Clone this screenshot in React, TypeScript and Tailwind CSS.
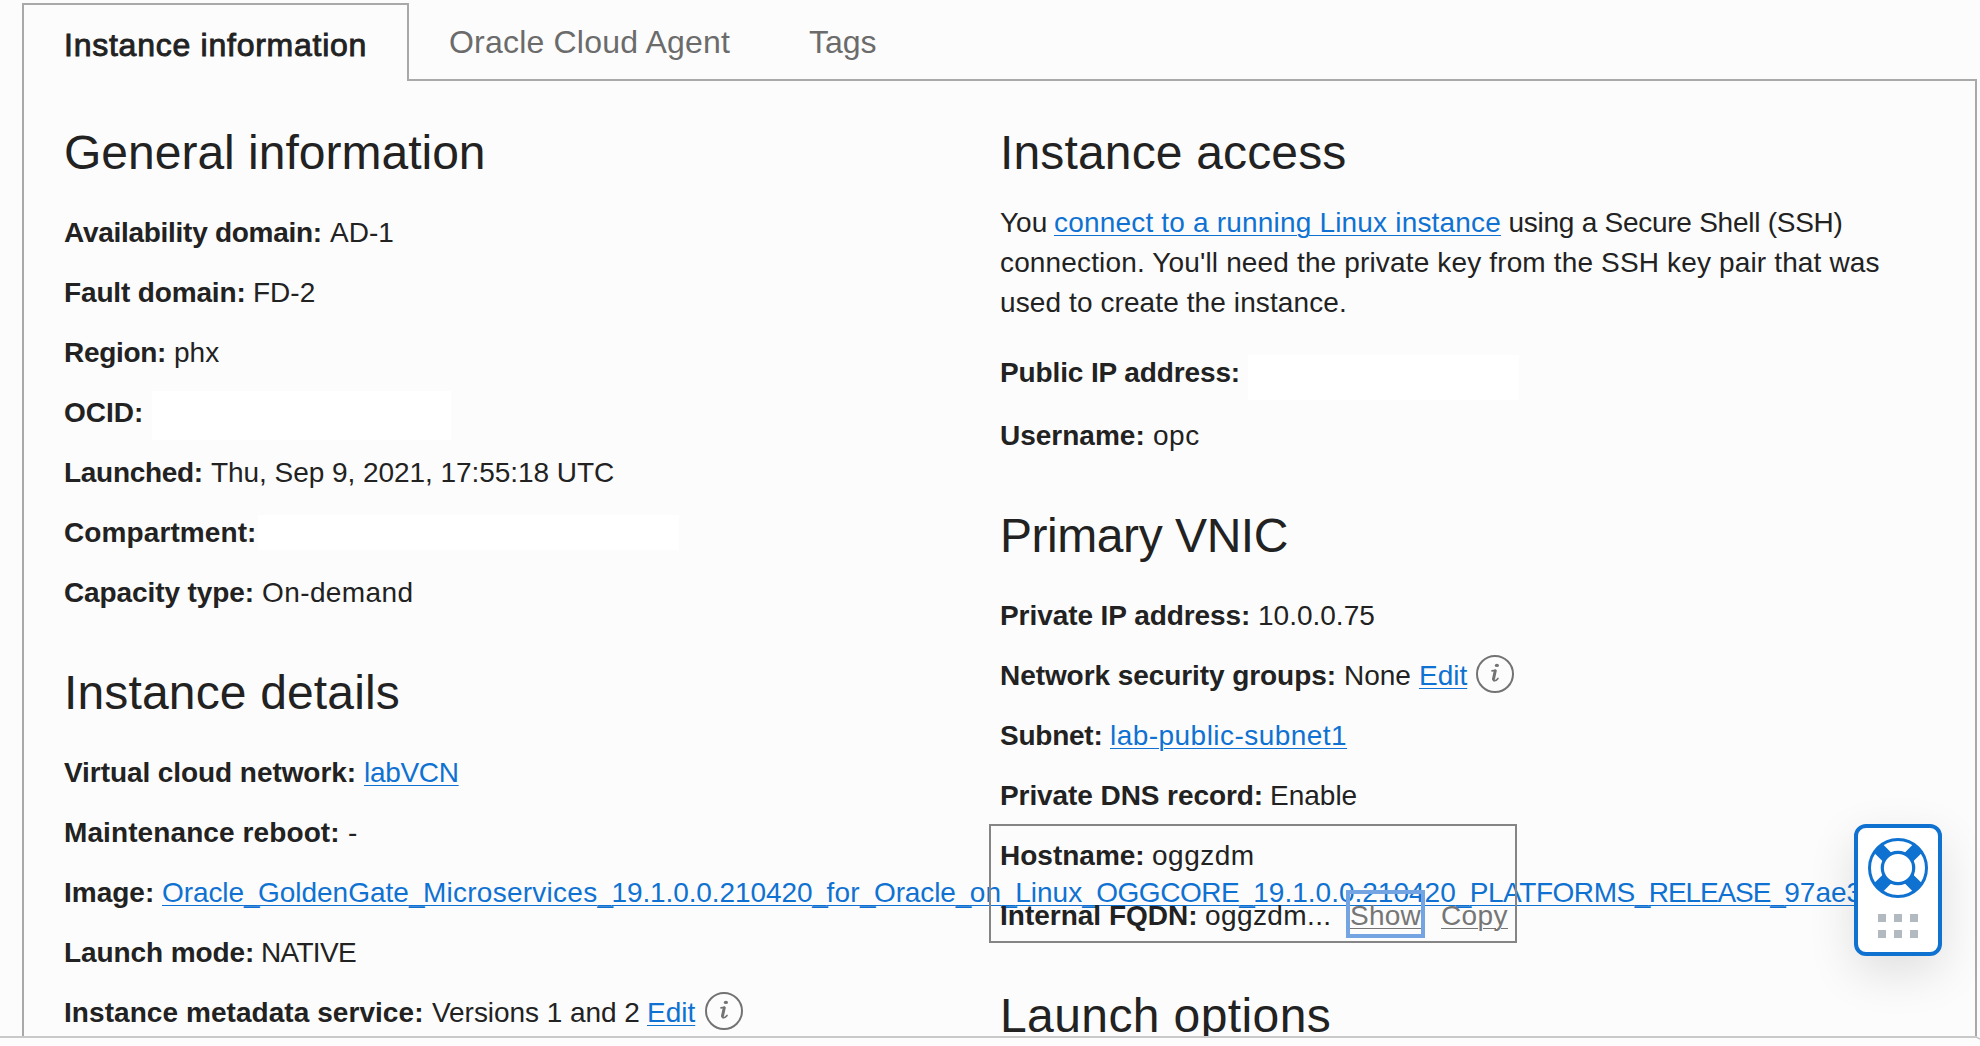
import { Fragment, type ReactNode } from "react";

const IMAGE_NAME_PARTS = [
  { text: "Oracle", tracking: "tracking-[-0.1px]" },
  { text: "GoldenGate", tracking: "tracking-[0px]" },
  { text: "Microservices", tracking: "tracking-[0.26px]" },
  { text: "19.1.0.0.210420", tracking: "tracking-[-0.1px]" },
  { text: "for", tracking: "tracking-[0.3px]" },
  { text: "Oracle", tracking: "tracking-[-0.1px]" },
  { text: "on", tracking: "tracking-[0.1px]" },
  { text: "Linux", tracking: "tracking-[0px]" },
  { text: "OGGCORE", tracking: "tracking-[-0.45px]" },
  { text: "19.1.0.0.210420", tracking: "tracking-[0px]" },
  { text: "PLATFORMS", tracking: "tracking-[-0.45px]" },
  { text: "RELEASE", tracking: "tracking-[-1.1px]" },
  { text: "97ae3", tracking: "tracking-[0px]" },
];

function Heading({ children, className = "" }: { children: ReactNode; className?: string }) {
  return (
    <h2 className={`mb-5 whitespace-nowrap text-[48px] leading-[60px] font-normal ${className}`}>
      {children}
    </h2>
  );
}

function Row({
  label,
  labelClass,
  children,
  className = "",
}: {
  label: string;
  labelClass: string;
  children?: ReactNode;
  className?: string;
}) {
  return (
    <div className={`flex h-[60px] items-center whitespace-nowrap leading-[60px] ${className}`}>
      <span className={`shrink-0 font-bold ${labelClass}`}>{label}</span>
      {children}
    </div>
  );
}

function Link({ children, className = "" }: { children: ReactNode; className?: string }) {
  return (
    <a
      href="#"
      className={`text-[#0f72d2] underline decoration-1 underline-offset-[3px] ${className}`}
    >
      {children}
    </a>
  );
}

function InfoIcon() {
  return (
    <svg viewBox="0 0 38 38" className="-mt-1 size-[38px] shrink-0" fill="none">
      <circle cx="19" cy="19" r="18" stroke="#737373" strokeWidth="2" />
      <ellipse cx="20.9" cy="10.4" rx="2.1" ry="1.7" fill="#737373" />
      <path
        d="M16 15.9 L19.6 15.2 L17.4 23.6 C16.8 26.6 19.6 26.6 22 23.4"
        stroke="#737373"
        strokeWidth="1.6"
        strokeLinecap="round"
        strokeLinejoin="round"
      />
      <path d="M19.2 16 L17.5 24" stroke="#737373" strokeWidth="3" strokeLinecap="round" />
    </svg>
  );
}

function ImageLink() {
  return (
    <Link>
      {IMAGE_NAME_PARTS.map((part, i) => (
        <Fragment key={i}>
          <span className={part.tracking}>{part.text}</span>
          {i < IMAGE_NAME_PARTS.length - 1 && <span className="tracking-[-1.57px]">_</span>}
        </Fragment>
      ))}
    </Link>
  );
}

function HelpWidget() {
  return (
    <div className="absolute top-[824px] left-[1854px] flex h-[132px] w-[88px] flex-col items-center rounded-[12px] border-4 border-[#1072d0] bg-white pt-[10px] shadow-[0_16px_48px_rgba(0,0,0,0.12)]">
      <svg viewBox="0 0 60 60" className="size-[60px]" fill="none" stroke="#1072d0">
        <path
          d="M10.6 10.6 L19 19 M49.4 10.6 L41 19 M10.6 49.4 L19 41 M49.4 49.4 L41 41"
          strokeWidth="12.2"
        />
        <circle cx="30" cy="30" r="28.5" strokeWidth="3" />
        <circle cx="30" cy="30" r="15.7" strokeWidth="3.2" fill="#fff" />
      </svg>
      <div className="mt-4 grid grid-cols-3 gap-2">
        {[0, 1, 2, 3, 4, 5].map((n) => (
          <span key={n} className="size-2 bg-[#b2bac1]" />
        ))}
      </div>
    </div>
  );
}

export default function App() {
  return (
    <div className="relative flex h-[1046px] w-[1980px] flex-col overflow-hidden bg-[#fcfcfc] font-['Liberation_Sans',Arial,sans-serif] text-[28px] text-[#222]">
      <div className="h-[1036px] overflow-hidden pt-[3px] pl-[22px]">
        <div className="flex h-[78px] w-[1955px] text-[32px] leading-10 whitespace-nowrap">
          <div className="w-[387px] shrink-0 border-2 border-b-0 border-[#a9a9a9] pt-5 pl-10 tracking-[0.75px] [-webkit-text-stroke:0.9px_#222]">
            Instance information
          </div>
          <div className="flex grow border-b-2 border-[#a9a9a9] pt-[19px] pl-10 text-[#6b6b6b]">
            <span className="w-[360px] tracking-[0.2px]">Oracle Cloud Agent</span>
            <span>Tags</span>
          </div>
        </div>

        <div className="flex h-[960px] w-[1955px] border-x-2 border-[#a9a9a9] pt-[42px] pl-10">
          <div className="w-[936px] shrink-0">
            <Heading>General information</Heading>
            <Row label="Availability domain:" labelClass="w-[266px] tracking-[-0.28px]">AD-1</Row>
            <Row label="Fault domain:" labelClass="w-[189px] tracking-[-0.15px]">FD-2</Row>
            <Row label="Region:" labelClass="w-[110px] tracking-[-0.3px]">phx</Row>
            <Row label="OCID:" labelClass="w-[88px]">
              <span className="mt-2 h-[49px] w-[299px] self-start bg-white" />
            </Row>
            <Row label="Launched:" labelClass="w-[147px] tracking-[-0.3px]">
              <span className="tracking-[-0.05px]">Thu, Sep 9, 2021, 17:55:18 UTC</span>
            </Row>
            <Row label="Compartment:" labelClass="w-[194px] tracking-[0.1px]">
              <span className="mt-3 h-[35px] w-[421px] self-start bg-white" />
            </Row>
            <Row label="Capacity type:" labelClass="w-[198px] tracking-[-0.1px]">
              <span className="tracking-[0.4px]">On-demand</span>
            </Row>

            <Heading className="mt-10 tracking-[0.15px]">Instance details</Heading>
            <Row label="Virtual cloud network:" labelClass="w-[300px] tracking-[-0.07px]">
              <Link className="tracking-[-0.3px]">labVCN</Link>
            </Row>
            <Row label="Maintenance reboot:" labelClass="w-[284px] tracking-[0.1px]">-</Row>
            <Row label="Image:" labelClass="w-[98px]">
              <ImageLink />
            </Row>
            <Row label="Launch mode:" labelClass="w-[197px] tracking-[-0.1px]">
              <span className="tracking-[-0.7px]">NATIVE</span>
            </Row>
            <Row label="Instance metadata service:" labelClass="w-[368px] tracking-[0.06px]">
              <span className="w-[215px] tracking-[-0.05px]">Versions 1 and 2</span>
              <Link className="mr-[10px]">Edit</Link>
              <InfoIcon />
            </Row>
          </div>

          <div className="grow">
            <Heading className="tracking-[0.15px]">Instance access</Heading>
            <div className="flex flex-col leading-10 whitespace-nowrap">
              <div>
                <span className="inline-block w-[54px]">You</span>
                <Link className="tracking-[0.185px]">connect to a running Linux instance</Link>
                <span className="tracking-[-0.26px]"> using a Secure Shell (SSH)</span>
              </div>
              <div className="tracking-[0.15px]">
                connection. You'll need the private key from the SSH key pair that was
              </div>
              <div className="tracking-[0.1px]">used to create the instance.</div>
            </div>
            <Row label="Public IP address:" labelClass="w-[248px] tracking-[-0.12px]" className="mt-5">
              <span className="mt-3 h-[45px] w-[271px] self-start bg-white" />
            </Row>
            <Row label="Username:" labelClass="w-[153px]" className="mt-[3px]">
              <span className="tracking-[0.5px]">opc</span>
            </Row>

            <Heading className="mt-10 tracking-[-0.45px]">Primary VNIC</Heading>
            <Row label="Private IP address:" labelClass="w-[258px] tracking-[-0.07px]">10.0.0.75</Row>
            <Row label="Network security groups:" labelClass="w-[344px] tracking-[-0.07px]">
              <span className="w-[75px]">None</span>
              <Link className="mr-[9px]">Edit</Link>
              <InfoIcon />
            </Row>
            <Row label="Subnet:" labelClass="w-[110px] tracking-[-0.25px]">
              <Link className="tracking-[0.46px]">lab-public-subnet1</Link>
            </Row>
            <Row label="Private DNS record:" labelClass="w-[270px] tracking-[-0.08px]">Enable</Row>
            <div className="relative">
              <div className="pointer-events-none absolute -top-0.5 -left-[11px] h-[119px] w-[528px] border-2 border-[#858585]" />
              <Row label="Hostname:" labelClass="w-[152px]">
                <span className="tracking-[0.5px]">oggzdm</span>
              </Row>
              <Row label="Internal FQDN:" labelClass="w-[205px]">
                <span className="w-[145px] tracking-[0.4px]">oggzdm...</span>
                <a
                  href="#"
                  className="relative w-[71px] tracking-[0.25px] text-[#767676] underline decoration-1 underline-offset-[3px]"
                >
                  Show
                  <span className="absolute top-1 -left-1 h-12 w-[79px] border-4 border-[#74a5e2]" />
                </a>
                <a
                  href="#"
                  className="ml-5 tracking-[0.4px] text-[#767676] underline decoration-1 underline-offset-[3px]"
                >
                  Copy
                </a>
              </Row>
            </div>

            <Heading className="mt-10 tracking-[0.4px]">Launch options</Heading>
          </div>
        </div>
      </div>

      <div className="flex h-[10px]">
        <div className="h-0.5 w-[1977px] bg-[#c9c9c9]" />
        <svg viewBox="0 0 4 4" className="-ml-px size-1" fill="none">
          <path d="M0 1 L4 3" stroke="#c4c4c4" strokeWidth="1.4" />
        </svg>
      </div>

      <HelpWidget />
    </div>
  );
}
